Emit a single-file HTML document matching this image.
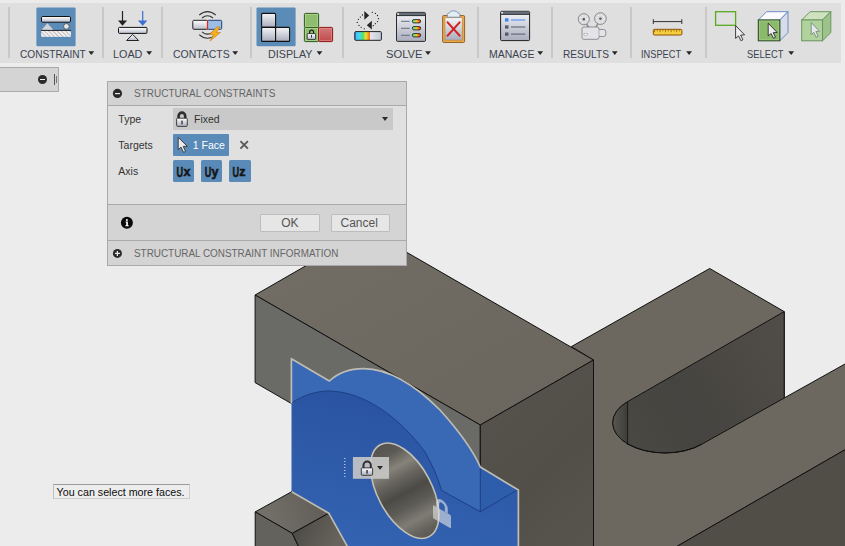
<!DOCTYPE html>
<html><head><meta charset="utf-8">
<style>
*{margin:0;padding:0;box-sizing:border-box}
html,body{width:845px;height:546px;overflow:hidden;background:#ececec;font-family:"Liberation Sans",sans-serif}
.a{position:absolute}
.lbl{position:absolute;font-size:11px;line-height:11px;color:#3a4250;white-space:nowrap;transform-origin:0 0}
.sep{position:absolute;top:7px;width:2px;height:51px;background:#c8c8c8}
.arr{position:absolute;width:0;height:0;border-left:2.9px solid transparent;border-right:2.9px solid transparent;border-top:3.8px solid #2a2a2a}
.ux{font-size:13.5px;line-height:14px;color:#1a1a1a;font-weight:bold;white-space:nowrap;letter-spacing:0}
.dt{position:absolute;font-size:10.5px;line-height:11px;color:#333;white-space:nowrap}
</style></head><body>

<!-- 3D model -->
<svg class="a" style="left:0;top:0" width="845" height="546" viewBox="0 0 845 546">
 <defs>
  <linearGradient id="gtop" x1="0" y1="0" x2="1" y2="1">
   <stop offset="0" stop-color="#726e65"/><stop offset="1" stop-color="#6a665e"/>
  </linearGradient>
  <linearGradient id="ghole" x1="0" y1="0" x2="0" y2="1">
   <stop offset="0" stop-color="#55534d"/><stop offset="0.12" stop-color="#5c5a54"/><stop offset="0.26" stop-color="#85837a"/><stop offset="0.36" stop-color="#6a6861"/><stop offset="0.52" stop-color="#4c4a45"/><stop offset="0.66" stop-color="#5e5c56"/><stop offset="0.8" stop-color="#7e7c74"/><stop offset="0.92" stop-color="#64625b"/><stop offset="1" stop-color="#5a5852"/>
  </linearGradient>
  <linearGradient id="gslot" gradientUnits="userSpaceOnUse" x1="620" y1="420" x2="784" y2="330">
   <stop offset="0" stop-color="#4a4843"/><stop offset="0.35" stop-color="#464440"/><stop offset="1" stop-color="#504d48"/>
  </linearGradient>
  <linearGradient id="gcurve" gradientUnits="userSpaceOnUse" x1="612" y1="0" x2="628" y2="0">
   <stop offset="0" stop-color="#5a5852"/><stop offset="1" stop-color="#3e3c38"/>
  </linearGradient>
  <linearGradient id="gdark" gradientUnits="userSpaceOnUse" x1="480" y1="420" x2="593" y2="546">
   <stop offset="0" stop-color="#55524c"/><stop offset="0.5" stop-color="#524f49"/><stop offset="1" stop-color="#58554f"/>
  </linearGradient>
  <linearGradient id="gsbt" gradientUnits="userSpaceOnUse" x1="262" y1="520" x2="322" y2="500">
   <stop offset="0" stop-color="#74716a"/><stop offset="1" stop-color="#615e57"/>
  </linearGradient>
  <linearGradient id="gsbr" gradientUnits="userSpaceOnUse" x1="300" y1="525" x2="335" y2="546">
   <stop offset="0" stop-color="#4f4d47"/><stop offset="1" stop-color="#67645d"/>
  </linearGradient>
  <linearGradient id="gin" gradientUnits="userSpaceOnUse" x1="330" y1="392" x2="300" y2="546">
   <stop offset="0" stop-color="#2a54a1"/><stop offset="0.5" stop-color="#2f5caa"/><stop offset="1" stop-color="#3464b3"/>
  </linearGradient>
 </defs>
 <g stroke="#111" stroke-width="1" stroke-linejoin="round">
  <!-- plate top -->
  <polygon fill="#6c6860" points="571.4,346.6 709.7,268.5 784.2,311.6 784.2,398 850,361.2 850,446.9 670.6,550 593.5,550 593.5,360"/>
  <!-- slot wall -->
  <path fill="url(#gslot)" d="M628,401.4 L784.2,311.6 L784.2,398 L702,444.1 A52.3 30.2 0 0 1 628,401.4 Z"/>
  <path d="M627.6,401.6 A52.3 30.2 0 0 0 627.6,444.1 Z" fill="url(#gcurve)" stroke="none"/>
  <line x1="627.6" y1="401.6" x2="627.6" y2="445" stroke="#1a1a1a"/>
  <path d="M702,444.1 A52.3 30.2 0 0 1 628,401.4" fill="none" stroke="#111"/>
  <!-- lower prong front -->
  <polygon fill="#514e48" points="670.6,550 850,446.9 850,550"/>
  <!-- left block -->
  <polygon fill="url(#gtop)" points="255.1,295 368,230 593.5,360 480.3,425"/>
  <polygon fill="#6a6b66" points="255.1,295 480.3,425 480.3,512.6 255.1,382.6"/>
  <polygon fill="url(#gdark)" points="480.3,425 593.5,360 593.5,550 480.3,550"/>
 </g>
 <!-- blue boss -->
 <path fill="#3969b5" d="M291.4,358.7 L329.3,381 C340,371 352,368.5 364,368.6 C390,369 415,385 440,410 C458,430 472,448 480.3,467 L518.4,490 L518.4,547 L291.5,547 Z"/>
 <path fill="url(#gin)" d="M292.2,402.6 C305,394 318,391 330,391 C365,392 400,418 425,452 C432,464 438,478 441.6,490.4 L480.3,511.7 L517.4,490 L517.4,546 L292.4,546 Z"/>
 <path fill="#2e5dab" d="M480.3,467.5 L517.4,490 L480.3,511.7 Z"/>
 <g fill="none" stroke="#1d3f85" stroke-width="1">
  <path d="M292.2,402.6 C305,394 318,391 330,391 C365,392 400,418 425,452 C432,464 438,478 441.6,490.4 L480.3,511.7 L518,489.5"/>
  <line x1="480.3" y1="467.5" x2="480.3" y2="511.7"/>
 </g>
 <path fill="none" stroke="#bfbcb3" stroke-width="1.7" stroke-linejoin="round" d="M291.4,403.5 L291.4,358.7 L329.3,381 C340,371 352,368.5 364,368.6 C390,369 415,385 440,410 C458,430 472,448 480.3,467 L518.4,490 L518.4,550"/>
 <!-- hole -->
 <ellipse cx="404.7" cy="490.7" rx="27" ry="52" transform="rotate(-28 404.7 490.7)" fill="url(#ghole)" stroke="#c2bfb5" stroke-width="1.6"/>
 <!-- small block -->
 <g stroke="#111" stroke-width="1" stroke-linejoin="round">
  <polygon fill="url(#gsbt)" points="291.7,491.7 255.2,511.9 292.3,533.4 328.8,513.2"/>
  <polygon fill="#63625c" points="255.2,511.9 292.3,533.4 298.8,547 255.2,547"/>
  <polygon fill="url(#gsbr)" points="292.3,533.4 328.8,513.2 347.7,547 298.8,547"/>
 </g>
 <path d="M291.7,491.7 L328.8,513.2 L347.7,547" fill="none" stroke="#bfbcb3" stroke-width="1.7"/>
</svg>

<!-- toolbar -->
<div class="a" style="left:0;top:0;width:845px;height:3px;background:#ebebeb"></div>
<div class="a" style="left:0;top:3px;width:841px;height:60px;background:#dfdfdf"></div>
<div class="sep" style="left:8px"></div>
<div class="sep" style="left:102px"></div>
<div class="sep" style="left:161px"></div>
<div class="sep" style="left:250px"></div>
<div class="sep" style="left:342px"></div>
<div class="sep" style="left:477px"></div>
<div class="sep" style="left:551px"></div>
<div class="sep" style="left:630px"></div>
<div class="sep" style="left:705px"></div>
<svg class="a" style="left:0;top:0" width="845" height="63" viewBox="0 0 845 63">
 <defs>
  <linearGradient id="wg" x1="0" y1="0" x2="0" y2="1"><stop offset="0" stop-color="#ffffff"/><stop offset="1" stop-color="#b9bccb"/></linearGradient>
  <linearGradient id="wg2" x1="0" y1="0" x2="0" y2="1"><stop offset="0" stop-color="#f4f5f8"/><stop offset="1" stop-color="#a9adbd"/></linearGradient>
  <linearGradient id="rb" x1="0" y1="0" x2="1" y2="0"><stop offset="0" stop-color="#3060e8"/><stop offset="0.06" stop-color="#40c8f8"/><stop offset="0.2" stop-color="#48d8f0"/><stop offset="0.3" stop-color="#50e060"/><stop offset="0.42" stop-color="#f0e030"/><stop offset="0.52" stop-color="#f89020"/><stop offset="0.58" stop-color="#f86020"/><stop offset="0.59" stop-color="#e4e6ee"/><stop offset="1" stop-color="#c4c8d4"/></linearGradient>
  <linearGradient id="pill" x1="0" y1="0" x2="1" y2="0"><stop offset="0" stop-color="#40d8f8"/><stop offset="0.3" stop-color="#a0e040"/><stop offset="0.55" stop-color="#f8d020"/><stop offset="0.85" stop-color="#f84020"/><stop offset="1" stop-color="#f89030"/></linearGradient>
  <linearGradient id="grn" x1="0" y1="0" x2="0" y2="1"><stop offset="0" stop-color="#8ec46e"/><stop offset="1" stop-color="#6aa850"/></linearGradient>
  <linearGradient id="red" x1="0" y1="0" x2="0" y2="1"><stop offset="0" stop-color="#d47a7a"/><stop offset="1" stop-color="#c04a4a"/></linearGradient>
  <pattern id="hatch" width="3" height="3" patternUnits="userSpaceOnUse" patternTransform="rotate(-45)"><rect width="3" height="3" fill="#f0f0f4"/><rect width="0.6" height="3" fill="#a89890"/></pattern>
 </defs>
 <polygon points="88.4,51.2 94.2,51.2 91.3,54.9" fill="#262626"/><polygon points="146.3,51.2 152.1,51.2 149.2,54.9" fill="#262626"/><polygon points="232.3,51.2 238.1,51.2 235.2,54.9" fill="#262626"/><polygon points="316.6,51.2 322.4,51.2 319.5,54.9" fill="#262626"/><polygon points="425.1,51.2 430.9,51.2 428.0,54.9" fill="#262626"/><polygon points="537.3,51.2 543.1,51.2 540.2,54.9" fill="#262626"/><polygon points="611.9,51.2 617.7,51.2 614.8,54.9" fill="#262626"/><polygon points="686.2,51.2 692.0,51.2 689.1,54.9" fill="#262626"/><polygon points="788.3,51.2 794.1,51.2 791.2,54.9" fill="#262626"/>
 <!-- constraint -->
 <rect x="36.4" y="7.4" width="39.2" height="38.9" rx="1.2" fill="#5b8bb7"/>
 <rect x="41.5" y="16.5" width="29" height="5.7" rx="1.2" fill="url(#wg)" stroke="#111" stroke-width="1"/>
 <polygon points="41.5,30 47.4,23.3 53.5,30" fill="#d0d2da"/>
 <circle cx="66.4" cy="26.4" r="2.8" fill="#e8e8ec" stroke="#222" stroke-width="0.6"/>
 <line x1="41" y1="30.4" x2="71" y2="30.4" stroke="#111" stroke-width="1"/>
 <rect x="41.1" y="30.9" width="29.9" height="6" fill="url(#hatch)"/>
 <!-- load -->
 <line x1="122.5" y1="11" x2="122.5" y2="22" stroke="#222" stroke-width="1.2"/>
 <polygon points="118,20.6 127.1,20.6 122.5,25.8" fill="#222"/>
 <line x1="142.7" y1="11" x2="142.7" y2="22" stroke="#3b6fd0" stroke-width="1.2"/>
 <polygon points="137.9,20.6 147.3,20.6 142.7,25.8" fill="#3b6fd0"/>
 <rect x="118.5" y="27.4" width="28.5" height="6" rx="1" fill="url(#wg)" stroke="#111" stroke-width="1"/>
 <polygon points="132.6,34.4 126.6,40.5 138.6,40.5" fill="url(#wg)" stroke="#222" stroke-width="1"/>
 <!-- contacts -->
 <g fill="none" stroke="#333" stroke-width="1.1">
  <path d="M199.2,15.2 Q207.5,8 215.8,15.2"/><path d="M202,18 Q207.5,13.5 213,18"/>
  <path d="M202,31.8 Q207.5,36.5 213,31.8"/><path d="M199.2,34.6 Q207.5,42 215.8,34.6"/>
 </g>
 <rect x="192.8" y="20.3" width="14.7" height="9" rx="1" fill="url(#wg)" stroke="#222" stroke-width="1"/>
 <rect x="207.5" y="20.3" width="14.2" height="9" rx="1" fill="#9dbde2" stroke="#24407a" stroke-width="1"/>
 <line x1="207.5" y1="20" x2="207.5" y2="29.8" stroke="#e02818" stroke-width="1.2"/>
 <polygon points="217,27 209.5,34.5 213.5,34.5 210,41 220.5,32.5 216.5,32.5 220,27" fill="#f4b020" stroke="#c87818" stroke-width="0.6"/>
 <!-- display -->
 <rect x="256.5" y="7.4" width="39.1" height="38.8" rx="1.2" fill="#5b8bb7"/>
 <g stroke="#111" stroke-width="1.1" fill="url(#wg2)">
  <rect x="261.6" y="13.4" width="14" height="14" rx="1"/>
  <rect x="261.6" y="27.4" width="14" height="14" rx="1"/>
  <rect x="275.6" y="27.4" width="14" height="14" rx="1"/>
 </g>
 <g stroke="#2c5a22" stroke-width="1" fill="#8fbd6e">
  <rect x="304.4" y="13.4" width="14.2" height="14" rx="1"/>
  <rect x="304.4" y="27.4" width="14.2" height="14.2" rx="1"/>
 </g>
 <g fill="none" stroke="#b4d894" stroke-width="0.7"><rect x="305.5" y="14.5" width="12" height="11.8"/><rect x="305.5" y="28.5" width="12" height="12"/></g>
 <rect x="318.6" y="27.4" width="14" height="14.2" rx="1" fill="url(#red)" stroke="#8a1818" stroke-width="1"/>
 <rect x="319.7" y="28.5" width="11.8" height="12" fill="none" stroke="#e89090" stroke-width="0.6"/>
 <path d="M309.6,34 v-1.8 a2,2 0 0 1 4,0 v1.8" fill="none" stroke="#1e1e1e" stroke-width="1.2"/>
 <rect x="307.2" y="33.6" width="8.4" height="5.8" rx="0.6" fill="url(#wg)" stroke="#1e1e1e" stroke-width="0.8"/>
 <rect x="311.1" y="35" width="0.9" height="2.6" fill="#222"/>
 <!-- solve 1 -->
 <g fill="#222"><circle cx="362.5" cy="15" r="0.65"/><circle cx="360.4" cy="17.1" r="0.65"/><circle cx="358.4" cy="19.3" r="0.65"/><circle cx="357.3" cy="22.4" r="0.65"/><circle cx="359" cy="25.4" r="0.65"/><circle cx="361.2" cy="27.3" r="0.65"/><circle cx="364.3" cy="28.8" r="0.65"/><circle cx="372.3" cy="12.3" r="0.65"/><circle cx="375.4" cy="13.4" r="0.65"/><circle cx="377.5" cy="15.5" r="0.65"/><circle cx="378.5" cy="18.7" r="0.65"/><circle cx="377.5" cy="21.6" r="0.65"/><circle cx="375.4" cy="23.7" r="0.65"/><circle cx="373.3" cy="25.7" r="0.65"/></g>
 <polygon points="364.3,11 364.3,19.8 369.2,15.4" fill="#262626"/>
 <polygon points="371.8,20.8 371.8,29.6 366.8,25.2" fill="#262626"/>
 <rect x="354.8" y="31.6" width="26.6" height="8.7" rx="1" fill="url(#rb)" stroke="#222" stroke-width="1"/>
 <!-- solve 2 -->
 <rect x="396.5" y="12.4" width="29" height="29" rx="1.2" fill="url(#wg2)" stroke="#2a2a2a" stroke-width="1"/>
 <rect x="397" y="12.9" width="28" height="2.8" fill="#66707c"/>
 <line x1="397" y1="15.6" x2="425" y2="15.6" stroke="#111" stroke-width="0.8"/>
 <rect x="397.4" y="13.2" width="1.6" height="1.6" fill="#f4f4f4"/>
 <g stroke="#5a6470" stroke-width="0.9"><line x1="401" y1="21.3" x2="409.8" y2="21.3"/><line x1="401" y1="28.3" x2="409.8" y2="28.3"/><line x1="401" y1="35.3" x2="409.8" y2="35.3"/></g>
 <g stroke="#222" stroke-width="0.9" fill="url(#pill)"><rect x="412.4" y="19.6" width="8.2" height="3.3" rx="1.4"/><rect x="412.4" y="26.6" width="8.2" height="3.3" rx="1.4"/><rect x="412.4" y="33.6" width="8.2" height="3.3" rx="1.4"/></g>
 <!-- solve 3 clipboard -->
 <rect x="442.6" y="15.5" width="22" height="27" rx="1.2" fill="#e9a84c" stroke="#8c5a1c" stroke-width="0.9"/>
 <rect x="445" y="17.8" width="17.2" height="22.3" fill="url(#wg2)" stroke="#b07a30" stroke-width="0.5"/>
 <path d="M447.3,17.2 h12.6 v-2.6 q0,-1.6 -2.2,-1.8 q-0.6,-2 -4.1,-2 q-3.5,0 -4.1,2 q-2.2,0.2 -2.2,1.8 z" fill="#e4ecf4" stroke="#6a88a8" stroke-width="0.8"/>
 <g stroke="#d42020" stroke-width="2.1" stroke-linecap="round"><line x1="447.6" y1="22.4" x2="459.6" y2="35.6"/><line x1="459.6" y1="22.4" x2="447.6" y2="35.6"/></g>
 <!-- manage -->
 <rect x="500.6" y="11.3" width="29" height="29.3" rx="1" fill="url(#wg2)" stroke="#222" stroke-width="1"/>
 <rect x="501.1" y="11.8" width="28" height="2.6" fill="#66707c"/><line x1="501" y1="14.4" x2="529" y2="14.4" stroke="#111" stroke-width="0.8"/>
 <rect x="501.4" y="12" width="1.5" height="1.5" fill="#fff"/>
 <rect x="505" y="18.3" width="3.5" height="3.2" fill="#3a86f0"/>
 <rect x="505" y="25.4" width="3.5" height="3.2" fill="#555a66"/>
 <rect x="505" y="32.5" width="3.5" height="3.2" fill="#555a66"/>
 <line x1="511" y1="20" x2="525.3" y2="20" stroke="#3a86f0" stroke-width="1"/>
 <line x1="511" y1="27" x2="525.3" y2="27" stroke="#555a66" stroke-width="1"/>
 <line x1="511" y1="34.1" x2="525.3" y2="34.1" stroke="#555a66" stroke-width="1"/>
 <!-- results -->
 <g stroke="#8a8a8e" stroke-width="1.5"><line x1="584.5" y1="21" x2="589.5" y2="28.5"/><line x1="599.5" y1="20.5" x2="595.5" y2="28"/></g>
 <g stroke="#7a7a80" stroke-width="0.8">
  <circle cx="583.8" cy="19.2" r="5.6" fill="#d6d6da"/><circle cx="600.4" cy="18.6" r="5.9" fill="#d6d6da"/>
 </g>
 <g fill="none" stroke="#f4f4f6" stroke-width="1.6" stroke-dasharray="1.2 1.6"><circle cx="583.8" cy="19.2" r="3.4"/><circle cx="600.4" cy="18.6" r="3.6"/></g>
 <circle cx="583.8" cy="19.2" r="1.2" fill="#555"/><circle cx="600.4" cy="18.6" r="1.2" fill="#555"/>
 <path d="M584,27 h13 q2,0 2,2 v0.5 h4.6 q2.2,0 2.2,2.2 v2.6 q0,2.2 -2.2,2.2 h-4.6 v0.8 q0,2 -2,2 h-13 q-2,0 -2,-2 v-8.3 q0,-2 2,-2 z" fill="#e4e4e8" stroke="#7a7a80" stroke-width="0.8"/>
 <line x1="599" y1="29.5" x2="599" y2="36.5" stroke="#9a9aa0" stroke-width="0.7"/>
 <rect x="584" y="33.4" width="3.4" height="2.2" fill="#fff" stroke="#8a8a90" stroke-width="0.5"/>
 <!-- inspect -->
 <g stroke="#333" stroke-width="1"><line x1="653.3" y1="21.6" x2="681.8" y2="21.6"/><line x1="653.3" y1="19.2" x2="653.3" y2="24"/><line x1="681.8" y1="19.2" x2="681.8" y2="24"/></g>
 <rect x="653.3" y="29.3" width="28.6" height="5.7" rx="1" fill="#f6cf3e" stroke="#8c5008" stroke-width="1"/>
 <path d="M654.60,30v2.2M657.35,30v1.3M660.10,30v2.2M662.85,30v1.3M665.60,30v2.2M668.35,30v1.3M671.10,30v2.2M673.85,30v1.3M676.60,30v2.2M679.35,30v1.3" stroke="#9c6a10" stroke-width="0.9"/>
 <!-- select -->
 <rect x="715.6" y="11.7" width="20" height="13.6" fill="none" stroke="#5aaa20" stroke-width="1.3"/>
 <path transform="translate(735.6,25.6)" d="M0,0 L0,12.8 L2.9,10.3 L5.3,15.1 L7.3,14.1 L5,9.5 L9,9.3 Z" fill="#eeeef2" stroke="#2a2a2a" stroke-width="0.9" stroke-linejoin="round"/>
 <polygon points="758.3,20 766.6,11.7 788,11.7 779.8,20" fill="#fbfbfd" stroke="#6a8ac8" stroke-width="1"/>
 <polygon points="779.8,20 788,11.7 788,32.6 779.8,40.8" fill="#d8dce6" stroke="#6a8ac8" stroke-width="1"/>
 <rect x="758.3" y="20" width="21.5" height="20.8" fill="#8cba6c" stroke="#24421c" stroke-width="1"/><rect x="759.3" y="21" width="19.5" height="18.8" fill="none" stroke="#a8d088" stroke-width="0.6"/>
 <path transform="translate(768.2,23.2)" d="M0,0 L0,12.8 L2.9,10.3 L5.3,15.1 L7.3,14.1 L5,9.5 L9,9.3 Z" fill="#eeeef2" stroke="#2a2a2a" stroke-width="0.9" stroke-linejoin="round"/>
 <polygon points="801.7,20 810,11.7 830.8,11.7 822.5,20" fill="#cfe2c0" stroke="#6a9460" stroke-width="1"/>
 <polygon points="822.5,20 830.8,11.7 830.8,32.6 822.5,40.8" fill="#9cc48a" stroke="#6a9460" stroke-width="1"/>
 <rect x="801.7" y="20" width="20.8" height="20.8" fill="#b0d29c" stroke="#6a9460" stroke-width="1"/>
 <path d="M811.2,22.5 L811.2,34.7 L813.8,32.3 L816.1,37.3 L818.1,36.3 L815.9,31.5 L819.5,31.3 Z" fill="#e4e8ec" stroke="#7a8a7a" stroke-width="0.9"/>
</svg>

<div class="lbl" style="left:19.58px;top:49px;transform:scaleX(0.92)">CONSTRAINT</div>
<div class="lbl" style="left:113.42px;top:49px;transform:scaleX(0.98)">LOAD</div>
<div class="lbl" style="left:172.55px;top:49px;transform:scaleX(0.95)">CONTACTS</div>
<div class="lbl" style="left:268.42px;top:49px;transform:scaleX(0.975)">DISPLAY</div>
<div class="lbl" style="left:386.08px;top:49px;transform:scaleX(1.02)">SOLVE</div>
<div class="lbl" style="left:488.85px;top:49px;transform:scaleX(0.954)">MANAGE</div>
<div class="lbl" style="left:562.58px;top:49px;transform:scaleX(0.92)">RESULTS</div>
<div class="lbl" style="left:641.46px;top:49px;transform:scaleX(0.84)">INSPECT</div>
<div class="lbl" style="left:746.65px;top:49px;transform:scaleX(0.85)">SELECT</div>

<!-- browser panel -->
<div class="a" style="left:-1px;top:67px;width:60px;height:25px;background:#d4d4d4;border:1px solid #a9a9a9"></div>
<div class="a" style="left:38px;top:75px;width:9px;height:9px;border-radius:50%;background:#2b2b2b"></div>
<div class="a" style="left:40px;top:79px;width:5px;height:1px;background:#eee"></div>
<div class="a" style="left:54px;top:74px;width:1px;height:11px;background:#555"></div>
<div class="a" style="left:56px;top:76px;width:1px;height:7px;background:#777"></div>

<!-- dialog -->
<div class="a" style="left:107px;top:81px;width:300px;height:160px;background:#e0e0e0;border:1px solid #a9a9a9"></div>
<div class="a" style="left:108px;top:82px;width:298px;height:23.5px;background:#d3d3d3;border-bottom:1px solid #a9a9a9"></div>
<div class="dt" style="left:134px;top:88px;font-size:10px;color:#666">STRUCTURAL CONSTRAINTS</div>

<div class="dt" style="left:118.3px;top:113.8px">Type</div>
<div class="a" style="left:172.5px;top:107.6px;width:220.5px;height:22.6px;background:#c9c9c9"></div>
<div class="dt" style="left:194px;top:113.8px">Fixed</div>
<div class="arr" style="left:381.5px;top:117px;border-left-width:3.5px;border-right-width:3.5px;border-top-width:4.5px"></div>

<div class="dt" style="left:118.3px;top:139.8px">Targets</div>
<div class="a" style="left:172.5px;top:133.5px;width:56.8px;height:22.9px;background:#5a8ab8;border-radius:1px"></div>
<div class="dt" style="left:192.8px;top:139.8px;color:#fff">1 Face</div>

<div class="dt" style="left:118.3px;top:165.8px">Axis</div>
<div class="a" style="left:172.5px;top:159.5px;width:21.9px;height:22.5px;background:#5a8ab8;border-radius:1.5px"></div>
<div class="a" style="left:200.7px;top:159.5px;width:21.6px;height:22.5px;background:#5a8ab8;border-radius:1.5px"></div>
<div class="a" style="left:228.5px;top:159.5px;width:22px;height:22.5px;background:#5a8ab8;border-radius:1.5px"></div>

<div class="a" style="left:108px;top:204px;width:298px;height:36.5px;background:#d4d4d4;border-top:1px solid #a9a9a9"></div>
<div class="a" style="left:260.4px;top:213.6px;width:59.3px;height:18.2px;background:#e6e6e6;border:1px solid #bdbdbd;border-radius:1px"></div>
<div class="a" style="left:330.5px;top:213.6px;width:59.3px;height:18.2px;background:#e6e6e6;border:1px solid #bdbdbd;border-radius:1px"></div>
<div class="dt" style="left:281.2px;top:217.2px;font-size:12px;line-height:12px;color:#555">OK</div>
<div class="dt" style="left:340.5px;top:217.2px;font-size:12px;line-height:12px;color:#555">Cancel</div>

<div class="a" style="left:107px;top:240.3px;width:300px;height:25.5px;background:#d4d4d4;border:1px solid #a9a9a9"></div>
<div class="dt" style="left:134.4px;top:248.2px;font-size:10px;color:#666;transform:scaleX(0.99);transform-origin:0 0">STRUCTURAL CONSTRAINT INFORMATION</div>

<svg class="a" style="left:0;top:0" width="420" height="270" viewBox="0 0 420 270">
 <defs><linearGradient id="lk" x1="0" y1="0" x2="0" y2="1"><stop offset="0" stop-color="#ffffff"/><stop offset="1" stop-color="#a8acb8"/></linearGradient></defs>
 <circle cx="117.45" cy="93.45" r="4.6" fill="#2a2a2a"/><rect x="115" y="93" width="5" height="1.2" fill="#eee"/>
 <circle cx="117.4" cy="253.4" r="4.5" fill="#2a2a2a"/><rect x="115" y="252.8" width="5" height="1.2" fill="#eee"/><rect x="116.8" y="251" width="1.2" height="5" fill="#eee"/>
 <circle cx="126.9" cy="222.8" r="6" fill="#0a0a0a"/><circle cx="126.9" cy="219.9" r="1" fill="#fff"/><path d="M125.6,221.6 h2.3 v3.6 h0.8 v1 h-3.3 v-1 h0.8 v-2.6 h-0.6 z" fill="#fff"/>
 <path d="M178.6,118.5 v-2.6 a3.3,3.3 0 0 1 6.6,0 v2.6" fill="none" stroke="#2e2e2e" stroke-width="2.6"/>
 <rect x="176.6" y="118.2" width="10.7" height="8.2" rx="1" fill="url(#lk)" stroke="#333" stroke-width="0.9"/>
 <rect x="181.4" y="120.6" width="1.2" height="3.8" fill="#222"/>
 <path d="M178.2,137.3 L178.2,149.6 L181,147.2 L183.6,152.4 L185.6,151.4 L183.2,146.4 L187.4,146.4 Z" fill="#e8e8ea" stroke="#333" stroke-width="0.9" stroke-linejoin="round"/>
 <g stroke="#585858" stroke-width="1.9"><line x1="240.4" y1="141.2" x2="247.9" y2="148.7"/><line x1="247.9" y1="141.2" x2="240.4" y2="148.7"/></g>
<g font-family="Liberation Sans" font-weight="bold" fill="#161616" stroke="#161616" stroke-width="0.55">
  <text transform="translate(176.6,176.6) scale(0.64,1)" font-size="14.2">U</text><text x="183.4" y="176.3" font-size="12.5">x</text>
  <text transform="translate(204.7,176.6) scale(0.64,1)" font-size="14.2">U</text><text x="211.5" y="176.3" font-size="12.5">y</text>
  <text transform="translate(232.5,176.6) scale(0.64,1)" font-size="14.2">U</text><text x="239.3" y="176.3" font-size="12.5">z</text>
 </g>
</svg>

<!-- lock widget -->
<svg class="a" style="left:330px;top:440px" width="140" height="106" viewBox="330 440 140 106">
 <defs><linearGradient id="lk2" x1="0" y1="0" x2="0" y2="1"><stop offset="0" stop-color="#ffffff"/><stop offset="1" stop-color="#a8b0c0"/></linearGradient></defs>
 <g transform="translate(433,505) skewY(30)" opacity="0.6" fill="#e6e6e6">
  <path d="M3.2,0 v-4.5 a5.8,5.8 0 0 1 11.6,0 v4.5 h-3 v-4.5 a2.8,2.8 0 0 0 -5.6,0 v4.5 z"/>
  <rect x="0" y="0" width="18" height="13.2" rx="1"/>
 </g>
 <rect x="352.9" y="457" width="36.1" height="21.8" fill="#c8c8c8" opacity="0.9"/>
 <path d="M363.5,468.5 v-3.3 a3.65,3.65 0 0 1 7.3,0 v3.3" fill="none" stroke="#2e2e2e" stroke-width="2"/>
 <rect x="361.3" y="467.9" width="11.3" height="7.4" rx="1" fill="url(#lk2)" stroke="#2e2e2e" stroke-width="0.9"/>
 <rect x="366.4" y="470" width="1.3" height="3.6" fill="#222"/>
 <polygon points="377.1,466 383,466 380,469.7" fill="#2a2a2a"/>
 <line x1="344.8" y1="458" x2="344.8" y2="478" stroke="#e8eef8" stroke-width="1" stroke-dasharray="1 2"/>
</svg>

<!-- tooltip -->
<div class="a" style="left:53px;top:483.5px;width:137px;height:15.5px;background:#ededee;border:1px solid #cdcdcd;border-top-color:#9c9c9c;border-left-color:#c0c0c0"></div>
<div class="dt" style="left:56.6px;top:486.6px;font-size:10.7px;color:#0c0c0c">You can select more faces.</div>

</body></html>
